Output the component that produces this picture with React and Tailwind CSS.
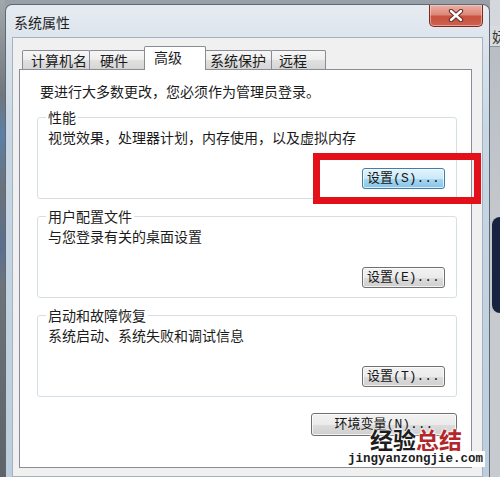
import React from "react";

function Btn({ children, blue = false, className = "" }) {
  return (
    <div
      className={
        "flex items-center justify-center rounded-[3px] border text-[13px] leading-none text-[#151515] shadow-[inset_0_0_0_1px_rgba(255,255,255,0.7)] font-[family-name:'Liberation_Mono','Noto_Sans_CJK_SC',monospace] " +
        (blue
          ? "border-[#3c7fb1] bg-[linear-gradient(to_bottom,#e3f3fc_0%,#cbe9f9_50%,#a9d9f3_50%,#88c4e6_100%)] "
          : "border-[#707070] bg-[linear-gradient(to_bottom,#f2f2f2_0%,#ebebeb_50%,#dddddd_50%,#cfcfcf_100%)] ") +
        className
      }
    >
      {children}
    </div>
  );
}

function Group({ title, text, btn, blue = false }) {
  return (
    <fieldset className="h-[91px] rounded-[3px] border border-[#d5dfe5] pl-[8px] pr-[11px]">
      <legend className="px-[2px] text-[14px] leading-[18px]">{title}</legend>
      <div className="mt-[2px] pl-[2px] text-[14px] leading-[18px]">{text}</div>
      <div className="mt-[22px] flex justify-end">
        <Btn blue={blue} className="h-[21px] w-[83px]">
          {btn}
        </Btn>
      </div>
    </fieldset>
  );
}

export default function App() {
  const tabOff =
    "relative flex h-[19px] items-center border-x border-t border-[#898c95] rounded-t-[2px] bg-[linear-gradient(to_bottom,#f6f6f6_0%,#ededed_50%,#e1e1e1_50%,#d5d5d5_100%)] text-[14px] leading-[18px]";
  return (
    <div className="relative flex h-[477px] w-[500px] overflow-hidden bg-[#9aa0a7] text-[#1b1b1b] font-[family-name:'Noto_Sans_CJK_SC',sans-serif]">
      {/* left background strip */}
      <div className="w-[5px] shrink-0 bg-[linear-gradient(to_bottom,#a3a8ad_0%,#70767d_20%,#5d7fa6_28%,#6b7178_40%,#5a6f8e_52%,#6e737a_60%,#5e6369_100%)]" />

      {/* window */}
      <div className="mt-[4px] flex w-[485px] shrink-0 flex-col rounded-t-[7px] border-x border-t border-[#5f6974] bg-[linear-gradient(to_bottom,#e6ebf1_0px,#dce4ec_36px,#c9d7e4_120px,#bccddd_477px)]">
        {/* title bar */}
        <div className="flex h-[32px] items-start justify-between">
          <div className="pl-[8px] pt-[8px] text-[14px] leading-[18px] text-[#1e1e1e]">系统属性</div>
          <div className="mr-[6px] flex h-[22px] w-[54px] items-center justify-center rounded-b-[5px] border border-t-0 border-[#7b2a21] bg-[linear-gradient(to_bottom,#eab0a4_0%,#dc8a7b_45%,#c9513f_55%,#cd6150_100%)] shadow-[inset_0_0_0_1px_rgba(255,220,210,0.5)]">
            <svg width="16" height="13" viewBox="0 0 16 13">
              <path d="M3 2 L13 11 M13 2 L3 11" stroke="#6a2a22" strokeWidth="4.4" strokeLinecap="round" />
              <path d="M3 2 L13 11 M13 2 L3 11" stroke="#ffffff" strokeWidth="2.4" strokeLinecap="round" />
            </svg>
          </div>
        </div>

        {/* body */}
        <div className="flex flex-1 flex-col px-[6px]">
          <div className="flex flex-1 flex-col border border-[#a4b2c0] bg-[#f0f0f0]">
            {/* tabs */}
            <div className="flex h-[31px] items-end pl-[9px]">
              <div className={tabOff + " w-[68px] pl-[8px]"}>计算机名</div>
              <div className={tabOff + " -ml-px w-[57px] pl-[10px]"}>硬件</div>
              <div className="relative z-10 -mx-[2px] -mb-px flex h-[24px] w-[62px] items-center rounded-t-[2px] border-x border-t border-[#898c95] bg-white pb-[4px] pl-[9px] text-[14px] leading-[18px]">
                高级
              </div>
              <div className={tabOff + " w-[68px] pl-[5px]"}>系统保护</div>
              <div className={tabOff + " -ml-px w-[55px] pl-[7px]"}>远程</div>
            </div>

            {/* tab panel */}
            <div className="ml-[6px] mr-[10px] flex h-[399px] flex-col border border-[#898c95] bg-white pl-[17px] pr-[14px] pt-[12px]">
              <div className="pl-[3px] text-[14px] leading-[18px]">要进行大多数更改，您必须作为管理员登录。</div>
              <div className="mt-[8px]">
                <Group title="性能" text="视觉效果，处理器计划，内存使用，以及虚拟内存" btn="设置(S)..." blue />
              </div>
              <div className="mt-[8px]">
                <Group title="用户配置文件" text="与您登录有关的桌面设置" btn="设置(E)..." />
              </div>
              <div className="mt-[8px]">
                <Group title="启动和故障恢复" text="系统启动、系统失败和调试信息" btn="设置(T)..." />
              </div>
              <div className="mt-[16px] flex justify-end">
                <Btn className="h-[23px] w-[146px]">环境变量(N)...</Btn>
              </div>
            </div>
          </div>
        </div>
      </div>

      {/* right background strip */}
      <div className="flex w-[10px] shrink-0 flex-col bg-[#c3c7cc]">
        <div className="h-[26px] bg-[#d4d7db]" />
        <div className="h-[20px] overflow-hidden bg-[#d9dcdf] pl-[2px] text-[14px] leading-[20px] text-[#333]">妩</div>
        <div className="h-px bg-[#8d9298]" />
        <div className="h-[170px] bg-[linear-gradient(to_bottom,#b9bec5,#c4c8cd)]" />
        <div className="h-[96px] bg-[#c3c7cc]">
          <div className="ml-[2px] h-[96px] rounded-l-[48px] bg-[#17233f]" />
        </div>
        <div className="flex-1 bg-[#c7cbcf]" />
      </div>

      {/* red highlight */}
      <div className="absolute left-[313px] top-[153px] h-[51px] w-[168px] border-[7px] border-[#e3101a]" />

      {/* watermark */}
      <div className="absolute left-[370px] top-[426px] text-[23px] font-bold leading-[26px] [text-shadow:0_0_2px_#fff,0_0_2px_#fff,0_0_3px_#fff]">
        <span className="text-[#1d1d1d]">经验</span>
        <span className="text-[#b3272c]">总结</span>
      </div>
      <div className="absolute left-[346px] top-[451px] bg-white px-[2px] text-[12.5px] font-bold leading-[16px] text-[#1d1d1d] font-[family-name:'Liberation_Mono',monospace]">
        jingyanzongjie.com
      </div>
    </div>
  );
}
